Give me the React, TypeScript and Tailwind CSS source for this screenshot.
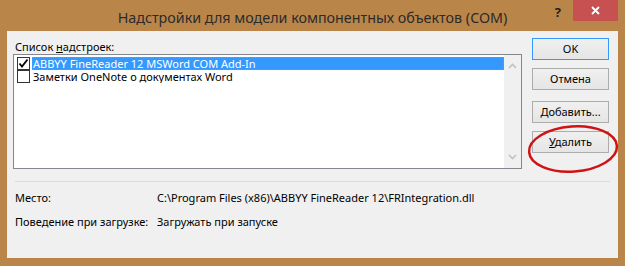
const ui = "font-['Segoe_UI','Noto_Sans',sans-serif]";

type BtnProps = {
  label: React.ReactNode;
  primary?: boolean;
  className?: string;
};

function DlgButton({ label, primary, className }: BtnProps) {
  return (
    <div
      className={`w-[77px] h-[22px] flex items-center justify-center border bg-gradient-to-b from-[#f0f0f0] to-[#e5e5e5] text-[11px] leading-[14px] text-black ${
        primary ? "border-[#3399ff]" : "border-[#acacac]"
      } ${className ?? ""}`}
    >
      {label}
    </div>
  );
}

function CheckBox({ checked }: { checked?: boolean }) {
  return (
    <div className="w-[13px] h-[13px] border border-[#333333] bg-white flex items-center justify-center shrink-0">
      {checked && (
        <svg width="11" height="11" viewBox="0 0 11 11">
          <path d="M1.5 5.5 L4 8.5 L9.5 1.5" fill="none" stroke="#000" strokeWidth="1.8" />
        </svg>
      )}
    </div>
  );
}

export default function App() {
  return (
    <div className={`relative w-[625px] h-[266px] bg-[#ba8549] flex flex-col overflow-hidden ${ui}`}>
      {/* title bar */}
      <div className="relative h-[31px] shrink-0">
        <div className="pt-[8px] text-center text-[14.3px] leading-[20px] text-[#2b2b2b]">
          Надстройки для модели компонентных объектов (COM)
        </div>
        <div className="absolute right-[7px] top-0 flex items-start">
          <div className="mr-[12px] mt-[4px] text-[13px] leading-[16px] font-bold text-[#222]">?</div>
          <div className="w-[45px] h-[21px] bg-[#c75050] flex items-center justify-center">
            <svg width="9" height="9" viewBox="0 0 9 9">
              <path d="M1 1 L8 8 M8 1 L1 8" stroke="#fff" strokeWidth="1.8" />
            </svg>
          </div>
        </div>
      </div>

      {/* client area */}
      <div className="mx-[7px] h-[227px] bg-[#f0f0f0] flex flex-col text-[11px] leading-[14px] text-black">
        <div className="h-[150px] flex">
          <div className="pl-[6px]">
            <div className="h-[23px] pt-[9px] pl-[2px]">
              Список <span className="underline">н</span>адстроек:
            </div>
            <div className="w-[509px] h-[115px] border border-[#828790] bg-white flex">
              <div className="flex-1 pt-[2px]">
                <div className="h-[13px] flex items-center pl-[3px]">
                  <CheckBox checked />
                  <div className="ml-[2px] flex-1 h-[13px] overflow-hidden bg-[#3399ff] text-white pl-[1px] leading-[13px] outline outline-1 outline-dotted outline-[#c98a3f] -outline-offset-1">
                    ABBYY FineReader 12 MSWord COM Add-In
                  </div>
                </div>
                <div className="h-[13px] flex items-center pl-[3px]">
                  <CheckBox />
                  <div className="ml-[2px] flex-1 h-[13px] overflow-hidden pl-[1px] leading-[13px]">
                    Заметки OneNote о документах Word
                  </div>
                </div>
              </div>
              <div className="w-[17px] bg-[#f0f0f0] flex flex-col items-center justify-between py-[8px]">
                <svg width="9" height="6" viewBox="0 0 9 6">
                  <path d="M1 5 L4.5 1.5 L8 5" fill="none" stroke="#c2c2c2" strokeWidth="1.6" />
                </svg>
                <svg width="9" height="6" viewBox="0 0 9 6">
                  <path d="M1 1 L4.5 4.5 L8 1" fill="none" stroke="#c2c2c2" strokeWidth="1.6" />
                </svg>
              </div>
            </div>
          </div>
          <div className="ml-[10px] pt-[7px] flex flex-col">
            <DlgButton label="OK" primary />
            <DlgButton label="Отмена" className="mt-[8px]" />
            <DlgButton
              label={
                <span>
                  <span className="underline">Д</span>обавить...
                </span>
              }
              className="mt-[11px]"
            />
            <DlgButton
              label={
                <span>
                  <span className="underline">У</span>далить
                </span>
              }
              className="mt-[8px]"
            />
          </div>
        </div>

        <div className="mx-[8px] h-px bg-[#dadada]" />

        <div className="pl-[8px] pt-[9px] grid grid-cols-[142px_1fr] gap-y-[10px] whitespace-nowrap">
          <div>Место:</div>
          <div>C:\Program Files (x86)\ABBYY FineReader 12\FRIntegration.dll</div>
          <div>Поведение при загрузке:</div>
          <div>Загружать при запуске</div>
        </div>
      </div>

      {/* hand-drawn annotation */}
      <svg className="absolute left-0 top-0 pointer-events-none" width="625" height="266">
        <ellipse
          cx="573"
          cy="149"
          rx="44"
          ry="22.5"
          transform="rotate(-4 573 149)"
          fill="none"
          stroke="#d01212"
          strokeWidth="2.5"
        />
      </svg>
    </div>
  );
}
